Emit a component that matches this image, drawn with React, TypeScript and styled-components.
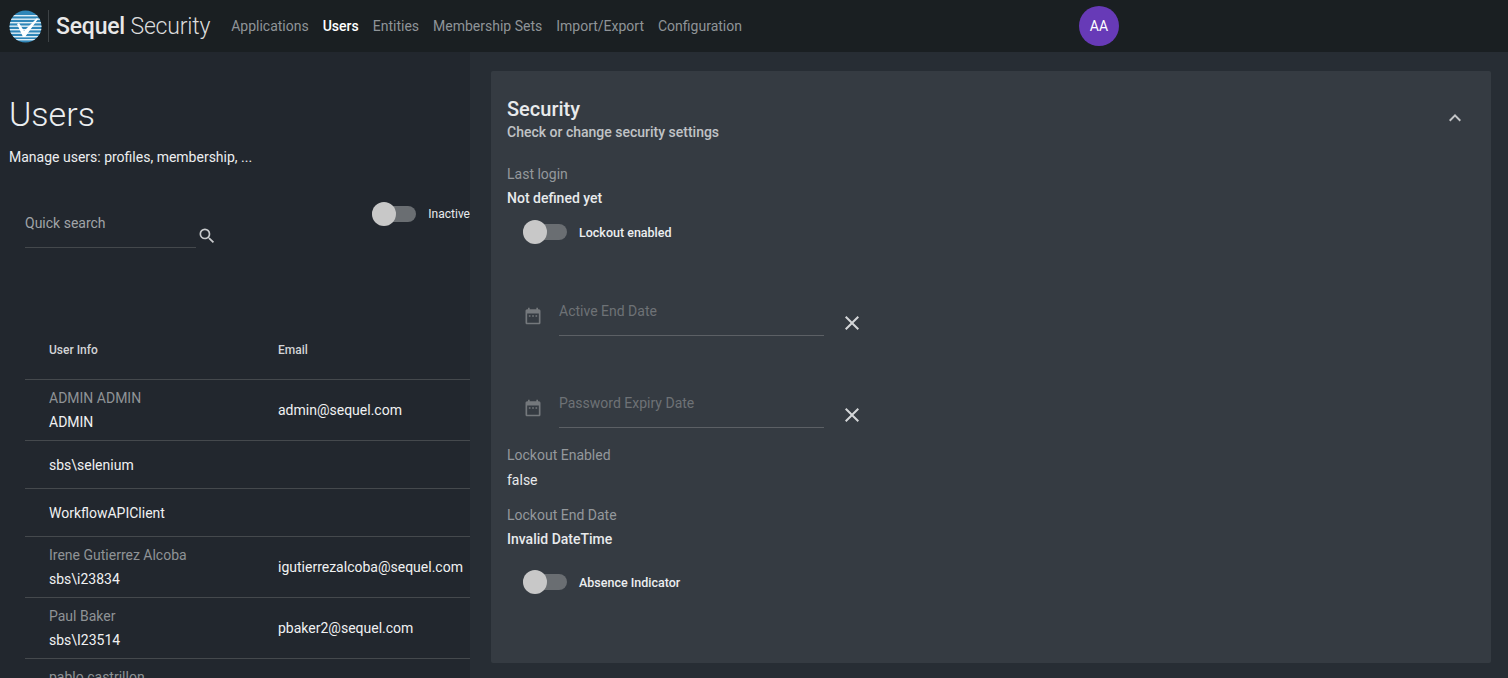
import styled, { createGlobalStyle } from "styled-components";

const GlobalStyle = createGlobalStyle`
  html, body {
    margin: 0;
    height: 100%;
    overflow: hidden;
    background: #22272e;
    font-family: Roboto, "Liberation Sans", sans-serif;
  }
`;

const Page = styled.div`
  width: 1508px;
  height: 678px;
  overflow: hidden;
  display: flex;
  flex-direction: column;
`;

// top bar
const TopBar = styled.header`
  height: 52px;
  flex: none;
  background: #1a1f22;
  display: grid;
  grid-template-columns: 1079px 40px 1fr;
  align-items: center;
`;
const Brand = styled.div`
  display: flex;
  align-items: center;
  padding-left: 9px;
`;
const BrandDivider = styled.div`
  width: 1px;
  height: 32px;
  margin: 0 7px 0 6px;
  background: #3d4245;
`;
const BrandName = styled.div`
  font-size: 23px;
  font-weight: 300;
  color: #dcdcdc;
  letter-spacing: -0.2px;
  white-space: nowrap;
  b {
    font-weight: 500;
    color: #e8e8e8;
  }
`;
const Nav = styled.nav`
  display: flex;
  gap: 14px;
  margin-left: 21px;
`;
const NavItem = styled.a<{ $active?: boolean }>`
  font-size: 14px;
  font-weight: ${p => (p.$active ? 500 : 400)};
  color: ${p => (p.$active ? "#ffffff" : "#8f9498")};
  white-space: nowrap;
`;
const Avatar = styled.div`
  width: 40px;
  height: 40px;
  border-radius: 50%;
  background: #673ab7;
  color: #fff;
  font-size: 14px;
  display: flex;
  align-items: center;
  justify-content: center;
`;

const Body = styled.div`
  flex: 1;
  display: flex;
  min-height: 0;
`;

// left list
const ListPane = styled.main`
  width: 470px;
  flex: none;
  overflow: hidden;
  background: #22272e;
  box-sizing: border-box;
`;
const PageTitle = styled.h1`
  margin: 41px 0 0 9px;
  font-size: 34px;
  line-height: 42px;
  font-weight: 300;
  color: #eceef0;
`;
const PageSub = styled.p`
  margin: 12px 0 0 9px;
  font-size: 14px;
  line-height: 20px;
  color: #eceef0;
`;
const Filters = styled.div`
  display: flex;
  margin: 37px 0 0 25px;
  height: 44px;
`;
const SearchField = styled.div`
  width: 199px;
  height: 44px;
  box-sizing: border-box;
  border-bottom: 1px solid #44484c;
  font-size: 14px;
  line-height: 38px;
  color: #a0a4a8;
`;
const SearchBtn = styled.div`
  margin: 22px 0 0 1px;
  width: 20px;
  height: 20px;
  color: #c8cacc;
`;
const InactiveToggle = styled.div`
  margin: -2px 0 0 155px;
  display: flex;
  align-items: center;
  gap: 12px;
  height: 24px;
  white-space: nowrap;
  font-size: 12px;
  font-weight: 400;
  color: #e8eaec;
`;
const Table = styled.div`
  margin: 72px 0 0 25px;
  width: 445px;
`;
const Row = styled.div<{ $h: number }>`
  display: grid;
  grid-template-columns: 229px 1fr;
  align-items: center;
  height: ${p => p.$h}px;
  padding-left: 24px;
  box-sizing: border-box;
  border-bottom: 1px solid #45494d;
  white-space: nowrap;
`;
const HeadCell = styled.div`
  font-size: 12px;
  font-weight: 500;
  color: #d2d4d6;
`;
const UserCell = styled.div`
  display: flex;
  flex-direction: column;
  gap: 4px;
`;
const UserName = styled.div`
  font-size: 14px;
  line-height: 20px;
  color: #8f9396;
`;
const Login = styled.div`
  font-size: 14px;
  line-height: 20px;
  color: #f0f1f2;
`;
const Email = styled.div`
  font-size: 14px;
  color: #f0f1f2;
`;

// security drawer
const Drawer = styled.aside`
  flex: 1;
  background: #272d34;
  padding: 19px 17px 15px 21px;
  box-sizing: border-box;
`;
const Card = styled.section`
  height: 592px;
  background: #353b42;
  border-radius: 2px;
  padding: 26px 16px 0;
  box-sizing: border-box;
  position: relative;
`;
const CardTitle = styled.h2`
  margin: 0;
  font-size: 20px;
  line-height: 24px;
  font-weight: 500;
  color: #e8eaec;
`;
const CardSub = styled.div`
  font-size: 14px;
  line-height: 22px;
  font-weight: 500;
  color: #c0c3c6;
`;
const Collapse = styled.div`
  position: absolute;
  top: 35px;
  right: 24px;
  width: 24px;
  height: 24px;
  color: #c4c6c8;
`;
const FieldLabel = styled.div<{ $top: number }>`
  margin-top: ${p => p.$top}px;
  font-size: 14px;
  line-height: 20px;
  color: #94989c;
`;
const FieldValue = styled.div<{ $top: number }>`
  margin-top: ${p => p.$top}px;
  font-size: 14px;
  line-height: 20px;
  font-weight: 500;
  color: #e8eaec;
`;
const FieldValuePlain = styled(FieldValue)`
  font-weight: 400;
`;
const ToggleRow = styled.div<{ $top: number }>`
  margin: ${p => p.$top}px 0 0 16px;
  display: flex;
  align-items: center;
  gap: 12px;
  height: 24px;
  font-size: 12.5px;
  font-weight: 500;
  color: #eceef0;
`;
const Switch = styled.div`
  position: relative;
  width: 44px;
  height: 24px;
  flex: none;
  &::before {
    content: "";
    position: absolute;
    left: 0;
    right: 0;
    top: 4px;
    height: 16px;
    border-radius: 8px;
    background: #6a6e72;
  }
  &::after {
    content: "";
    position: absolute;
    left: 0;
    top: 0;
    width: 24px;
    height: 24px;
    border-radius: 50%;
    background: #c8c8c8;
  }
`;
const DateRow = styled.div<{ $top: number }>`
  margin: ${p => p.$top}px 0 0 16px;
  display: flex;
  height: 44px;
`;
const CalendarIcon = styled.div`
  margin-top: 14px;
  width: 20px;
  height: 20px;
  color: #74787c;
`;
const DateInput = styled.div`
  margin-left: 16px;
  width: 265px;
  height: 44px;
  box-sizing: border-box;
  border-bottom: 1px solid #5c6065;
  font-size: 14px;
  line-height: 38px;
  color: #6e7276;
`;
const ClearBtn = styled.div`
  margin: 19px 0 0 16px;
  width: 24px;
  height: 24px;
  color: #d4d6d8;
`;

function Logo() {
  return (
    <svg width="33" height="33" viewBox="0 0 33 33">
      <defs>
        <clipPath id="logoDisc">
          <circle cx="16.5" cy="16.5" r="16" />
        </clipPath>
      </defs>
      <g clipPath="url(#logoDisc)">
        <rect width="33" height="33" fill="#2f86b8" />
        {[5, 8.5, 12, 15.5, 19, 22.5, 26, 29].map(y => (
          <rect key={y} x="0" y={y} width="33" height="1.4" fill="#dfeef6" />
        ))}
      </g>
      <path d="M8 14l2-1 5 8 13-13 1 1-13 18h-2z" fill="#fff" />
    </svg>
  );
}

function SearchIcon() {
  return (
    <svg width="20" height="20" viewBox="0 0 24 24" fill="currentColor">
      <path d="M15.5 14h-.79l-.28-.27A6.47 6.47 0 0 0 16 9.5 6.5 6.5 0 1 0 9.5 16c1.61 0 3.09-.59 4.23-1.57l.27.28v.79l5 4.99L20.49 19l-4.99-5zm-6 0C7.01 14 5 11.99 5 9.5S7.01 5 9.5 5 14 7.01 14 9.5 11.99 14 9.5 14z" />
    </svg>
  );
}

function CalendarGlyph() {
  return (
    <svg width="20" height="20" viewBox="0 0 24 24" fill="currentColor">
      <path d="M9 11H7v2h2v-2zm4 0h-2v2h2v-2zm4 0h-2v2h2v-2zm2-7h-1V2h-2v2H8V2H6v2H5c-1.11 0-1.99.9-1.99 2L3 20c0 1.1.89 2 2 2h14c1.1 0 2-.9 2-2V6c0-1.1-.9-2-2-2zm0 16H5V9h14v11z" />
    </svg>
  );
}

function CloseGlyph() {
  return (
    <svg width="24" height="24" viewBox="0 0 24 24" fill="currentColor">
      <path d="M19 6.41 17.59 5 12 10.59 6.41 5 5 6.41 10.59 12 5 17.59 6.41 19 12 13.41 17.59 19 19 17.59 13.41 12z" />
    </svg>
  );
}

function ChevronUp() {
  return (
    <svg width="24" height="24" viewBox="0 0 24 24" fill="currentColor">
      <path d="M7.41 15.41 12 10.83l4.59 4.58L18 14l-6-6-6 6z" />
    </svg>
  );
}

const navItems = ["Applications", "Users", "Entities", "Membership Sets", "Import/Export", "Configuration"];

const users = [
  { name: "ADMIN ADMIN", login: "ADMIN", email: "admin@sequel.com", h: 61 },
  { login: "sbs\\selenium", h: 48 },
  { login: "WorkflowAPIClient", h: 48 },
  { name: "Irene Gutierrez Alcoba", login: "sbs\\i23834", email: "igutierrezalcoba@sequel.com", h: 61 },
  { name: "Paul Baker", login: "sbs\\I23514", email: "pbaker2@sequel.com", h: 61 },
  { name: "pablo castrillon", login: "sbs\\i23000", h: 61 },
];

export default function App() {
  return (
    <Page>
      <GlobalStyle />
      <TopBar>
        <Brand>
          <Logo />
          <BrandDivider />
          <BrandName>
            <b>Sequel</b> Security
          </BrandName>
          <Nav>
            {navItems.map(item => (
              <NavItem key={item} $active={item === "Users"}>
                {item}
              </NavItem>
            ))}
          </Nav>
        </Brand>
        <Avatar>AA</Avatar>
      </TopBar>
      <Body>
        <ListPane>
          <PageTitle>Users</PageTitle>
          <PageSub>Manage users: profiles, membership, ...</PageSub>
          <Filters>
            <SearchField>Quick search</SearchField>
            <SearchBtn>
              <SearchIcon />
            </SearchBtn>
            <InactiveToggle>
              <Switch />
              Inactive
            </InactiveToggle>
          </Filters>
          <Table>
            <Row $h={60}>
              <HeadCell>User Info</HeadCell>
              <HeadCell>Email</HeadCell>
            </Row>
            {users.map(u => (
              <Row key={u.login} $h={u.h}>
                <UserCell>
                  {u.name && <UserName>{u.name}</UserName>}
                  <Login>{u.login}</Login>
                </UserCell>
                <Email>{u.email}</Email>
              </Row>
            ))}
          </Table>
        </ListPane>
        <Drawer>
          <Card>
            <CardTitle>Security</CardTitle>
            <CardSub>Check or change security settings</CardSub>
            <Collapse>
              <ChevronUp />
            </Collapse>
            <FieldLabel $top={21}>Last login</FieldLabel>
            <FieldValue $top={4}>Not defined yet</FieldValue>
            <ToggleRow $top={12}>
              <Switch />
              Lockout enabled
            </ToggleRow>
            <DateRow $top={48}>
              <CalendarIcon>
                <CalendarGlyph />
              </CalendarIcon>
              <DateInput>Active End Date</DateInput>
              <ClearBtn>
                <CloseGlyph />
              </ClearBtn>
            </DateRow>
            <DateRow $top={48}>
              <CalendarIcon>
                <CalendarGlyph />
              </CalendarIcon>
              <DateInput>Password Expiry Date</DateInput>
              <ClearBtn>
                <CloseGlyph />
              </ClearBtn>
            </DateRow>
            <FieldLabel $top={17}>Lockout Enabled</FieldLabel>
            <FieldValuePlain $top={5}>false</FieldValuePlain>
            <FieldLabel $top={15}>Lockout End Date</FieldLabel>
            <FieldValue $top={4}>Invalid DateTime</FieldValue>
            <ToggleRow $top={21}>
              <Switch />
              Absence Indicator
            </ToggleRow>
          </Card>
        </Drawer>
      </Body>
    </Page>
  );
}
